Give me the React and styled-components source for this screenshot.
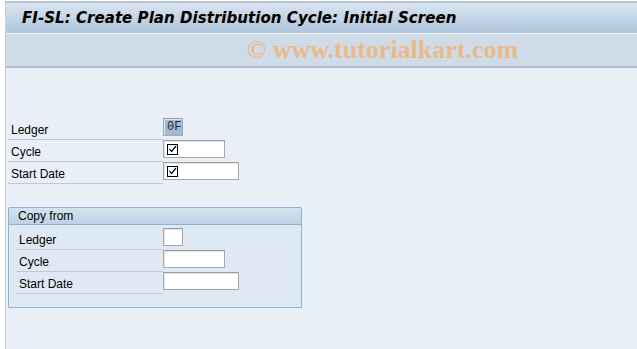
import React from 'react'
import styled, {createGlobalStyle} from 'styled-components'

const Global = createGlobalStyle`
  html, body { margin: 0; padding: 0; background: #ffffff; }
  body { font-family: "Liberation Sans", Arial, sans-serif; }
`

const Screen = styled.div`
  width: 637px;
  height: 349px;
  box-sizing: border-box;
  padding-left: 5px;
  background: #ffffff;
  display: flex;
  flex-direction: column;
`

const Frame = styled.div`
  flex: 1;
  display: flex;
  flex-direction: column;
  border-left: 1px solid #c6ced8;
  border-top: 2px solid #b7c1cc;
  margin-top: 1px;
  background: #e8eff7;
`

const TitleBar = styled.div`
  height: 30px;
  display: flex;
  align-items: center;
  padding-left: 16px;
  background: linear-gradient(#d9e5f1, #aec6dd);
  border-bottom: 1px solid #f2f6fa;
`

const Title = styled.h1`
  margin: 0;
  font-family: "DejaVu Sans", Tahoma, sans-serif;
  font-weight: bold;
  font-style: italic;
  font-size: 15px;
  letter-spacing: 0.05px;
  color: #000;
  text-shadow: 0 0 1px rgba(190, 130, 60, 0.35);
`

const Toolbar = styled.div`
  height: 32px;
  display: flex;
  align-items: center;
  justify-content: center;
  background: #cfdce7;
  border-bottom: 2px solid #a9bbcd;
`

const Watermark = styled.span`
  font-family: "Liberation Serif", "Times New Roman", serif;
  font-weight: bold;
  font-size: 26px;
  color: #eab98a;
  margin-left: 122px;
`

const Body = styled.div`
  padding: 50px 0 0 2px;
  display: flex;
  flex-direction: column;
`

const Row = styled.div`
  display: flex;
  align-items: center;
  height: 22px;
`

const Label = styled.div`
  width: ${p => p.$w}px;
  box-sizing: border-box;
  height: 22px;
  line-height: 24px;
  padding-left: 3px;
  font-size: 12px;
  color: #000;
  border-bottom: 1px solid #c3c9cf;
  align-self: flex-start;
`

const Input = styled.div`
  width: ${p => p.$w}px;
  height: 18px;
  box-sizing: border-box;
  margin-top: -4px;
  border: 1px solid #a5a9ad;
  border-top-color: #9a9ea2;
  background: ${p => (p.$hl ? '#a4b9d1' : '#ffffff')};
  box-shadow: inset 1px 1px 0 #e2e4e6;
  display: flex;
  align-items: center;
  padding-left: 3px;
  font-family: "Liberation Mono", "Courier New", monospace;
  font-size: 12px;
  color: #1a2a3a;
`

const Check = () => (
  <svg width="11" height="11" viewBox="0 0 11 11">
    <rect x="0.5" y="0.5" width="10" height="10" fill="none" stroke="#000" />
    <path d="M2.5 5 L4.5 7.5 L9 2" fill="none" stroke="#000" strokeWidth="1.2" />
  </svg>
)

const Group = styled.div`
  margin: 23px 0 0 0;
  width: 294px;
  height: 101px;
  box-sizing: border-box;
  border: 1px solid #8fb1d1;
  border-radius: 2px 2px 0 0;
  background: #dee9f3;
`

const GroupHead = styled.div`
  height: 16px;
  line-height: 16px;
  padding-left: 9px;
  font-size: 12px;
  background: linear-gradient(#d6e3f0, #bcd2e7);
  border-bottom: 1px solid #8fb1d1;
`

const GroupBody = styled.div`
  padding: 3px 0 0 7px;
`

const fields = [
  {label: 'Ledger', w: 20, value: '0F', hl: true},
  {label: 'Cycle', w: 62, check: true},
  {label: 'Start Date', w: 76, check: true},
]

const copyFields = [
  {label: 'Ledger', w: 20},
  {label: 'Cycle', w: 62},
  {label: 'Start Date', w: 76},
]

export default function App() {
  return (
    <>
      <Global />
      <Screen>
        <Frame>
          <TitleBar>
            <Title>FI-SL: Create Plan Distribution Cycle: Initial Screen</Title>
          </TitleBar>
          <Toolbar>
            <Watermark>© www.tutorialkart.com</Watermark>
          </Toolbar>
          <Body>
            {fields.map(f => (
              <Row key={f.label}>
                <Label $w={155}>{f.label}</Label>
                <Input $w={f.w} $hl={f.hl}>
                  {f.value}
                  {f.check && <Check />}
                </Input>
              </Row>
            ))}
            <Group>
              <GroupHead>Copy from</GroupHead>
              <GroupBody>
                {copyFields.map(f => (
                  <Row key={f.label}>
                    <Label $w={147}>{f.label}</Label>
                    <Input $w={f.w} />
                  </Row>
                ))}
              </GroupBody>
            </Group>
          </Body>
        </Frame>
      </Screen>
    </>
  )
}
